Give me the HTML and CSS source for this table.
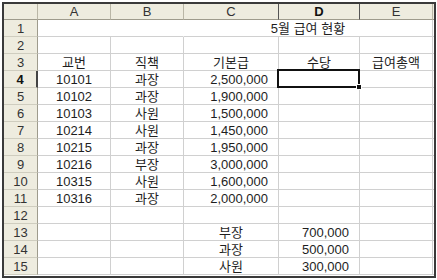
FILE: index.html
```html
<!DOCTYPE html>
<html lang="ko">
<head>
<meta charset="utf-8">
<title>5월 급여 현황</title>
<link rel="stylesheet" href="styles.css">
</head>
<body>
<div class="sheet">
  <div class="grid">
    <div class="hd corner"></div>
    <div class="hd">A</div>
    <div class="hd">B</div>
    <div class="hd">C</div>
    <div class="hd sel">D</div>
    <div class="hd">E</div>
    <div class="hd last"></div>

    <div class="rh">1</div>
    <div class="c span2 nr"></div>
    <div class="c span3 ctr">5월 급여 현황</div>
    <div class="c"></div>

    <div class="rh">2</div>
    <div class="c"></div><div class="c"></div><div class="c"></div><div class="c"></div><div class="c"></div><div class="c"></div>

    <div class="rh">3</div>
    <div class="c ctr">교번</div><div class="c ctr">직책</div><div class="c ctr">기본급</div><div class="c ctr">수당</div><div class="c ctr">급여총액</div><div class="c"></div>

    <div class="rh sel">4</div>
    <div class="c ctr">10101</div><div class="c ctr">과장</div><div class="c num">2,500,000</div><div class="c active"><span class="cursor"><span class="handle"></span></span></div><div class="c"></div><div class="c"></div>

    <div class="rh">5</div>
    <div class="c ctr">10102</div><div class="c ctr">과장</div><div class="c num">1,900,000</div><div class="c"></div><div class="c"></div><div class="c"></div>

    <div class="rh">6</div>
    <div class="c ctr">10103</div><div class="c ctr">사원</div><div class="c num">1,500,000</div><div class="c"></div><div class="c"></div><div class="c"></div>

    <div class="rh">7</div>
    <div class="c ctr">10214</div><div class="c ctr">사원</div><div class="c num">1,450,000</div><div class="c"></div><div class="c"></div><div class="c"></div>

    <div class="rh">8</div>
    <div class="c ctr">10215</div><div class="c ctr">과장</div><div class="c num">1,950,000</div><div class="c"></div><div class="c"></div><div class="c"></div>

    <div class="rh">9</div>
    <div class="c ctr">10216</div><div class="c ctr">부장</div><div class="c num">3,000,000</div><div class="c"></div><div class="c"></div><div class="c"></div>

    <div class="rh">10</div>
    <div class="c ctr">10315</div><div class="c ctr">사원</div><div class="c num">1,600,000</div><div class="c"></div><div class="c"></div><div class="c"></div>

    <div class="rh">11</div>
    <div class="c ctr">10316</div><div class="c ctr">과장</div><div class="c num">2,000,000</div><div class="c"></div><div class="c"></div><div class="c"></div>

    <div class="rh">12</div>
    <div class="c"></div><div class="c"></div><div class="c"></div><div class="c"></div><div class="c"></div><div class="c"></div>

    <div class="rh">13</div>
    <div class="c"></div><div class="c"></div><div class="c ctr">부장</div><div class="c num">700,000</div><div class="c"></div><div class="c"></div>

    <div class="rh">14</div>
    <div class="c"></div><div class="c"></div><div class="c ctr">과장</div><div class="c num">500,000</div><div class="c"></div><div class="c"></div>

    <div class="rh">15</div>
    <div class="c"></div><div class="c"></div><div class="c ctr">사원</div><div class="c num">300,000</div><div class="c"></div><div class="c"></div>
  </div>
</div>
</body>
</html>
```

FILE: styles.css
```css
html, body {
  margin: 0;
  padding: 0;
  background: #ffffff;
}

body {
  font-family: "Liberation Sans", "Noto Sans CJK KR", sans-serif;
  font-size: 13px;
  color: #1e1e1e;
}

.sheet {
  margin: 2px 0 0 2px;
  width: 430px;
  height: 272px;
  border: 2px solid #3a3a3a;
  overflow: hidden;
  background: #ffffff;
}

.grid {
  display: grid;
  grid-template-columns: 34px 73px 73px 95px 81px 73px 1fr;
  grid-template-rows: 16px repeat(15, 17px);
}

.grid > div {
  box-sizing: border-box;
  min-width: 0;
  white-space: nowrap;
  overflow: visible;
}

.hd {
  background: #eeecdf;
  border-right: 1px solid #b9b6a6;
  border-bottom: 1px solid #9e9b8c;
  color: #333333;
  font-size: 13px;
  line-height: 15px;
  text-align: center;
}

.hd.sel {
  font-weight: bold;
  border-left: 1px solid #555555;
  border-right: 1px solid #555555;
  margin-left: -1px;
  color: #111111;
}

.rh {
  background: #eeecdf;
  border-right: 1px solid #9e9b8c;
  border-bottom: 1px solid #cfcdbf;
  color: #333333;
  font-size: 13px;
  line-height: 17px;
  text-align: center;
}

.rh.sel {
  font-weight: bold;
  border-right: 2px solid #444444;
  color: #111111;
}

.c {
  border-right: 1px solid #d0d0d0;
  border-bottom: 1px solid #d0d0d0;
  line-height: 17px;
  padding: 0 2px;
}

.c.nr {
  border-right-color: transparent;
}

.span2 {
  grid-column: span 2;
}

.span3 {
  grid-column: span 3;
}

.ctr {
  text-align: center;
}

.num {
  text-align: right;
  padding-right: 10px;
}

.active {
  position: relative;
}

.cursor {
  position: absolute;
  left: -2px;
  top: -2px;
  right: -1px;
  bottom: -1px;
  border: 2px solid #111111;
}

.handle {
  position: absolute;
  right: -4px;
  bottom: -4px;
  width: 4px;
  height: 4px;
  background: #111111;
  border: 1px solid #ffffff;
}
```
